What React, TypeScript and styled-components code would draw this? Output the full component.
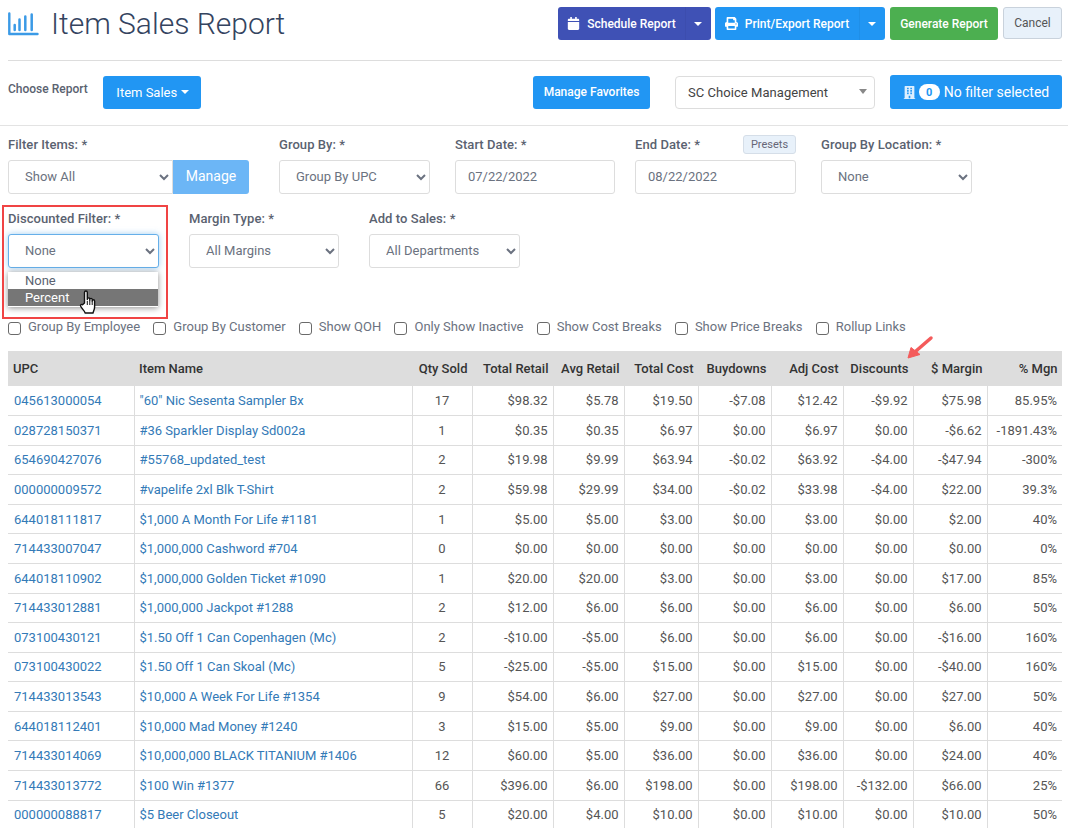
import React from "react";
import styled, { createGlobalStyle } from "styled-components";
import { FaCalendar, FaPrint, FaBuilding } from "react-icons/fa";

const Global = createGlobalStyle`
  html, body { margin: 0; padding: 0; height: 828px; overflow: hidden; background: #fff; }
  body { font-family: Roboto, "Liberation Sans", sans-serif; font-size: 13px; color: #333; }
  * { box-sizing: border-box; }
`;

const Page = styled.div`
  padding: 0 6px 0 8px;
  position: relative;
  height: 828px;
  overflow: hidden;
`;

const Header = styled.header`
  display: flex;
  align-items: flex-start;
  height: 61px;
  border-bottom: 1px solid #ddd;
`;

const TitleBlock = styled.div`
  display: flex;
  align-items: center;
  flex: 1;
  height: 48px;
`;

const Title = styled.h1`
  margin: 0 0 0 12px;
  font-size: 30px;
  font-weight: 300;
  color: #34445f;
  line-height: 48px;
`;

const Actions = styled.div`
  display: flex;
  padding-top: 7px;
`;

const Button = styled.button<{ $bg: string; $gap?: number; $w?: number }>`
  height: 33px;
  width: ${(p) => (p.$w ? `${p.$w}px` : "auto")};
  margin-left: ${(p) => p.$gap ?? 0}px;
  background: ${(p) => p.$bg};
  color: #fff;
  border: 0;
  border-radius: 3px;
  font: 500 12px Roboto, sans-serif;
  padding: 0;
  display: flex;
  align-items: center;
  justify-content: center;
`;

const SplitButton = styled.div<{ $bg: string; $w: number; $gap: number; $main: number; $line: string }>`
  display: grid;
  grid-template-columns: ${(p) => p.$main}px 1fr;
  width: ${(p) => p.$w}px;
  height: 33px;
  margin-left: ${(p) => p.$gap}px;
  background: ${(p) => p.$bg};
  border-radius: 3px;
  color: #fff;
  font: 500 12px Roboto, sans-serif;
  & > div { display: flex; align-items: center; justify-content: center; gap: 7px; }
  & > div + div { border-left: 1px solid ${(p) => p.$line}; padding-right: 2px; }
  svg { font-size: 13px; }
`;

const Caret = styled.i`
  display: inline-block;
  width: 0;
  height: 0;
  border-left: 4px solid transparent;
  border-right: 4px solid transparent;
  border-top: 4px solid #fff;
`;

const CancelButton = styled.button`
  width: 59px;
  height: 32px;
  margin-left: 5px;
  background: #e8f1fa;
  border: 1px solid #c9d2dc;
  border-radius: 3px;
  color: #555;
  font: 400 12px Roboto, sans-serif;
`;

const ChooseRow = styled.section`
  display: flex;
  align-items: center;
  height: 65px;
  margin: 0 -6px 0 -8px;
  padding: 0 6px 2px 8px;
  border-bottom: 1px solid #e3e3e3;
`;

const ChooseLabel = styled.span`
  font-size: 12px;
  font-weight: 500;
  color: #5a6270;
  margin: -7px 15px 0 0;
`;

const ReportButton = styled(Button)`
  width: 98px;
  font-size: 13px;
  font-weight: 400;
  gap: 4px;
  flex: none;
  padding-left: 2px;
`;

const Spacer = styled.div`
  flex: 1;
`;

const FavoriteButton = styled(Button)`
  width: 117px;
  flex: none;
`;

const ChainSelect = styled.div`
  position: relative;
  width: 200px;
  height: 33px;
  margin-left: 25px;
  border: 1px solid #ddd;
  border-radius: 4px;
  display: flex;
  align-items: center;
  padding-left: 12px;
  color: #444;
  letter-spacing: 0.05px;
  &::after {
    content: "";
    position: absolute;
    right: 7px;
    top: 12px;
    border-left: 4px solid transparent;
    border-right: 4px solid transparent;
    border-top: 5px solid #888;
  }
`;

const FilterButton = styled.button`
  width: 172px;
  height: 34px;
  margin-left: 15px;
  background: #2196f3;
  border: 0;
  border-radius: 3px;
  color: #fff;
  font: 400 14px Roboto, sans-serif;
  padding: 0;
  display: flex;
  align-items: center;
  justify-content: center;
  gap: 3px;
  svg { font-size: 13px; color: #dcefff; }
`;

const CountBadge = styled.span`
  width: 21px;
  height: 16px;
  border-radius: 8px;
  background: #fff;
  color: #2196f3;
  font-size: 11px;
  font-weight: 700;
  display: flex;
  align-items: center;
  justify-content: center;
  margin-right: 1px;
`;

const FilterRow = styled.div<{ $h: number }>`
  display: flex;
  align-items: flex-end;
  height: ${(p) => p.$h}px;
`;

const Field = styled.div<{ $w: number; $gap?: number }>`
  position: relative;
  width: ${(p) => p.$w}px;
  margin-right: ${(p) => p.$gap ?? 30}px;
  flex: none;
`;

const Label = styled.label`
  display: block;
  font-size: 13px;
  font-weight: 500;
  color: #5a6270;
  letter-spacing: 0.06px;
  line-height: 15px;
  margin-bottom: 8px;
`;

const Select = styled.select<{ $focus?: boolean }>`
  width: 100%;
  height: 34px;
  border: 1px solid ${(p) => (p.$focus ? "#66afe9" : "#ddd")};
  border-radius: 3px;
  background: #fff;
  color: #6b7280;
  padding: 0 12px 2px;
  font: 400 13px Roboto, sans-serif;
  box-shadow: ${(p) => (p.$focus ? "0 0 6px rgba(102,175,233,.6)" : "none")};
  outline: none;
`;

const InputGroup = styled.div`
  display: flex;
`;

const GroupSelect = styled(Select)`
  width: 165px;
  border-radius: 3px 0 0 3px;
`;

const ManageButton = styled.button`
  width: 76px;
  height: 34px;
  background: #6cb6f6;
  border: 0;
  border-radius: 0 3px 3px 0;
  color: #fff;
  font: 400 14px Roboto, sans-serif;
  padding: 0 0 2px;
`;

const DateInput = styled.input`
  width: 100%;
  height: 34px;
  border: 1px solid #ddd;
  border-radius: 3px;
  background: #fff;
  color: #6b7280;
  padding: 0 12px 2px;
  font: 400 13px Roboto, sans-serif;
  outline: none;
`;

const PresetsButton = styled.button`
  position: absolute;
  right: 0;
  top: -2px;
  width: 53px;
  height: 19px;
  background: #e8f1fa;
  border: 1px solid #d5dee8;
  border-radius: 3px;
  color: #667;
  font: 400 11px Roboto, sans-serif;
  padding: 0;
`;

const Menu = styled.ul`
  position: absolute;
  left: 0;
  top: 61px;
  width: 150px;
  margin: 0;
  padding: 0 0 1px;
  list-style: none;
  background: #fff;
  box-shadow: 0 1px 6px rgba(0, 0, 0, 0.45);
`;

const MenuItem = styled.li<{ $active?: boolean }>`
  height: 17px;
  line-height: 17px;
  padding-left: 17px;
  font-size: 13px;
  background: ${(p) => (p.$active ? "#767676" : "#fff")};
  color: ${(p) => (p.$active ? "#fff" : "#5a6270")};
`;

const RedBox = styled.div`
  position: absolute;
  left: 2px;
  top: 205px;
  width: 166px;
  height: 114px;
  border: 2px solid #f04444;
  pointer-events: none;
`;

const HandCursor = styled.svg`
  position: absolute;
  left: 79px;
  top: 290px;
  width: 18px;
  height: 24px;
`;

const ArrowMark = styled.svg`
  position: absolute;
  left: 906px;
  top: 335px;
  width: 28px;
  height: 26px;
`;

const CheckRow = styled.div`
  display: flex;
  gap: 13.2px;
  height: 17px;
  margin-top: 50px;
`;

const CheckLabel = styled.label`
  display: flex;
  align-items: center;
  gap: 7px;
  color: #6b7280;
  font-size: 13px;
`;

const CheckBox = styled.input`
  appearance: none;
  width: 13px;
  height: 13px;
  margin: 3px 0 0;
  border: 1px solid #6a6a6a;
  border-radius: 3px;
  background: #fff;
`;

const Table = styled.table`
  table-layout: fixed;
  width: 1054px;
  margin-top: 16px;
  border-collapse: collapse;
  font-size: 13px;
`;

const Th = styled.th<{ $left?: boolean }>`
  height: 35px;
  background: #ddd;
  padding: 0 4.5px 0 5px;
  font-size: 13px;
  font-weight: 500;
  color: #333;
  text-align: ${(p) => (p.$left ? "left" : "right")};
  white-space: nowrap;
`;

const Td = styled.td<{ $align?: string }>`
  height: 29.58px;
  padding: 0 5px;
  border: 1px solid #ddd;
  border-top: 0;
  color: #555;
  text-align: ${(p) => p.$align ?? "right"};
  white-space: nowrap;
  &:first-child { border-left: 0; padding-left: 6px; }
  &:last-child { border-right: 0; }
`;

const RowLink = styled.a`
  color: #337ab7;
  text-decoration: none;
`;

const cols = [126, 278, 60, 81, 71, 74, 73, 72, 70, 74, 75];
const heads = ["Qty Sold", "Total Retail", "Avg Retail", "Total Cost", "Buydowns", "Adj Cost", "Discounts", "$ Margin", "% Mgn"];
const rows: string[][] = [
  ["045613000054", '"60" Nic Sesenta Sampler Bx', "17", "$98.32", "$5.78", "$19.50", "-$7.08", "$12.42", "-$9.92", "$75.98", "85.95%"],
  ["028728150371", "#36 Sparkler Display Sd002a", "1", "$0.35", "$0.35", "$6.97", "$0.00", "$6.97", "$0.00", "-$6.62", "-1891.43%"],
  ["654690427076", "#55768_updated_test", "2", "$19.98", "$9.99", "$63.94", "-$0.02", "$63.92", "-$4.00", "-$47.94", "-300%"],
  ["000000009572", "#vapelife 2xl Blk T-Shirt", "2", "$59.98", "$29.99", "$34.00", "-$0.02", "$33.98", "-$4.00", "$22.00", "39.3%"],
  ["644018111817", "$1,000 A Month For Life #1181", "1", "$5.00", "$5.00", "$3.00", "$0.00", "$3.00", "$0.00", "$2.00", "40%"],
  ["714433007047", "$1,000,000 Cashword #704", "0", "$0.00", "$0.00", "$0.00", "$0.00", "$0.00", "$0.00", "$0.00", "0%"],
  ["644018110902", "$1,000,000 Golden Ticket #1090", "1", "$20.00", "$20.00", "$3.00", "$0.00", "$3.00", "$0.00", "$17.00", "85%"],
  ["714433012881", "$1,000,000 Jackpot #1288", "2", "$12.00", "$6.00", "$6.00", "$0.00", "$6.00", "$0.00", "$6.00", "50%"],
  ["073100430121", "$1.50 Off 1 Can Copenhagen (Mc)", "2", "-$10.00", "-$5.00", "$6.00", "$0.00", "$6.00", "$0.00", "-$16.00", "160%"],
  ["073100430022", "$1.50 Off 1 Can Skoal (Mc)", "5", "-$25.00", "-$5.00", "$15.00", "$0.00", "$15.00", "$0.00", "-$40.00", "160%"],
  ["714433013543", "$10,000 A Week For Life #1354", "9", "$54.00", "$6.00", "$27.00", "$0.00", "$27.00", "$0.00", "$27.00", "50%"],
  ["644018112401", "$10,000 Mad Money #1240", "3", "$15.00", "$5.00", "$9.00", "$0.00", "$9.00", "$0.00", "$6.00", "40%"],
  ["714433014069", "$10,000,000 BLACK TITANIUM #1406", "12", "$60.00", "$5.00", "$36.00", "$0.00", "$36.00", "$0.00", "$24.00", "40%"],
  ["714433013772", "$100 Win #1377", "66", "$396.00", "$6.00", "$198.00", "$0.00", "$198.00", "-$132.00", "$66.00", "25%"],
  ["000000088817", "$5 Beer Closeout", "5", "$20.00", "$4.00", "$10.00", "$0.00", "$10.00", "$0.00", "$10.00", "50%"],
];
const checks = ["Group By Employee", "Group By Customer", "Show QOH", "Only Show Inactive", "Show Cost Breaks", "Show Price Breaks", "Rollup Links"];

const ChartIcon = () => (
  <svg width="31" height="24" viewBox="0 0 31 24" style={{ marginTop: -1 }}>
    <path d="M1.3 1.5V22H29.5" fill="none" stroke="#3b9ae6" strokeWidth="2.4" strokeLinecap="round" strokeLinejoin="round" />
    <path d="M6.7 18v-5M11.5 18V7.5M17.3 18V4.5M23.7 18V2.5" fill="none" stroke="#3b9ae6" strokeWidth="2.5" strokeLinecap="round" />
  </svg>
);

export default function App() {
  return (
    <Page>
      <Global />
      <Header>
        <TitleBlock>
          <ChartIcon />
          <Title>Item Sales Report</Title>
        </TitleBlock>
        <Actions>
          <SplitButton $bg="#3f51b5" $w={153} $gap={0} $main={127} $line="#3c4dae">
            <div><FaCalendar />Schedule Report</div>
            <div><Caret /></div>
          </SplitButton>
          <SplitButton $bg="#2196f3" $w={170} $gap={4} $main={144} $line="#1f8fe8">
            <div><FaPrint />Print/Export Report</div>
            <div><Caret /></div>
          </SplitButton>
          <Button $bg="#4caf50" $gap={5} $w={108}>Generate Report</Button>
          <CancelButton>Cancel</CancelButton>
        </Actions>
      </Header>

      <ChooseRow>
        <ChooseLabel>Choose Report</ChooseLabel>
        <ReportButton $bg="#2196f3">Item Sales <Caret /></ReportButton>
        <Spacer />
        <FavoriteButton $bg="#2196f3">Manage Favorites</FavoriteButton>
        <ChainSelect>SC Choice Management</ChainSelect>
        <FilterButton><FaBuilding /><CountBadge>0</CountBadge>No filter selected</FilterButton>
      </ChooseRow>

      <FilterRow $h={68}>
        <Field $w={241}>
          <Label>Filter Items: *</Label>
          <InputGroup>
            <GroupSelect defaultValue="Show All"><option>Show All</option></GroupSelect>
            <ManageButton>Manage</ManageButton>
          </InputGroup>
        </Field>
        <Field $w={151} $gap={25}>
          <Label>Group By: *</Label>
          <Select defaultValue="Group By UPC"><option>Group By UPC</option></Select>
        </Field>
        <Field $w={160} $gap={20}>
          <Label>Start Date: *</Label>
          <DateInput defaultValue="07/22/2022" />
        </Field>
        <Field $w={161} $gap={25}>
          <Label>End Date: *</Label>
          <PresetsButton>Presets</PresetsButton>
          <DateInput defaultValue="08/22/2022" />
        </Field>
        <Field $w={151}>
          <Label>Group By Location: *</Label>
          <Select defaultValue="None"><option>None</option></Select>
        </Field>
      </FilterRow>

      <FilterRow $h={74}>
        <Field $w={151}>
          <Label>Discounted Filter: *</Label>
          <Select $focus defaultValue="None"><option>None</option><option>Percent</option></Select>
          <Menu>
            <MenuItem>None</MenuItem>
            <MenuItem $active>Percent</MenuItem>
          </Menu>
        </Field>
        <Field $w={150}>
          <Label>Margin Type: *</Label>
          <Select defaultValue="All Margins"><option>All Margins</option></Select>
        </Field>
        <Field $w={151}>
          <Label>Add to Sales: *</Label>
          <Select defaultValue="All Departments"><option>All Departments</option></Select>
        </Field>
      </FilterRow>

      <CheckRow>
        {checks.map((c) => (
          <CheckLabel key={c}><CheckBox type="checkbox" />{c}</CheckLabel>
        ))}
      </CheckRow>

      <Table>
        <colgroup>
          {cols.map((w, i) => <col key={i} style={{ width: w }} />)}
        </colgroup>
        <thead>
          <tr>
            <Th $left>UPC</Th>
            <Th $left>Item Name</Th>
            {heads.map((h) => <Th key={h}>{h}</Th>)}
          </tr>
        </thead>
        <tbody>
          {rows.map((r) => (
            <tr key={r[0]}>
              <Td $align="left"><RowLink href="#">{r[0]}</RowLink></Td>
              <Td $align="left"><RowLink href="#">{r[1]}</RowLink></Td>
              <Td $align="center">{r[2]}</Td>
              {r.slice(3).map((v, i) => <Td key={i}>{v}</Td>)}
            </tr>
          ))}
        </tbody>
      </Table>

      <RedBox />
      <HandCursor viewBox="0 0 18 24">
        <path d="M5.5 13V2.4a1.4 1.4 0 0 1 2.8 0V9.5V8.8a1.3 1.3 0 0 1 2.5 0V10.5V9.6a1.2 1.2 0 0 1 2.4 0v1.4a1.2 1.2 0 0 1 2.4 0V17c0 2.5-1.3 4.5-1.6 6H6.2c-.6-2-2.6-3.6-4.4-6.5-.9-1.5.5-2.9 1.7-1.7z" fill="#fff" stroke="#111" strokeWidth="1.4" strokeLinejoin="round" />
        <path d="M8.3 11v4M10.8 11v4M13.2 11v4" stroke="#111" strokeWidth="1" />
      </HandCursor>
      <ArrowMark viewBox="0 0 28 26">
        <path d="M25 3 10 16" stroke="#f45b5b" strokeWidth="3.5" strokeLinecap="round" fill="none" />
        <path d="M2 23 5 12.5 14 19.5z" fill="#f45b5b" stroke="#f45b5b" strokeWidth="1" strokeLinejoin="round" />
      </ArrowMark>
    </Page>
  );
}
